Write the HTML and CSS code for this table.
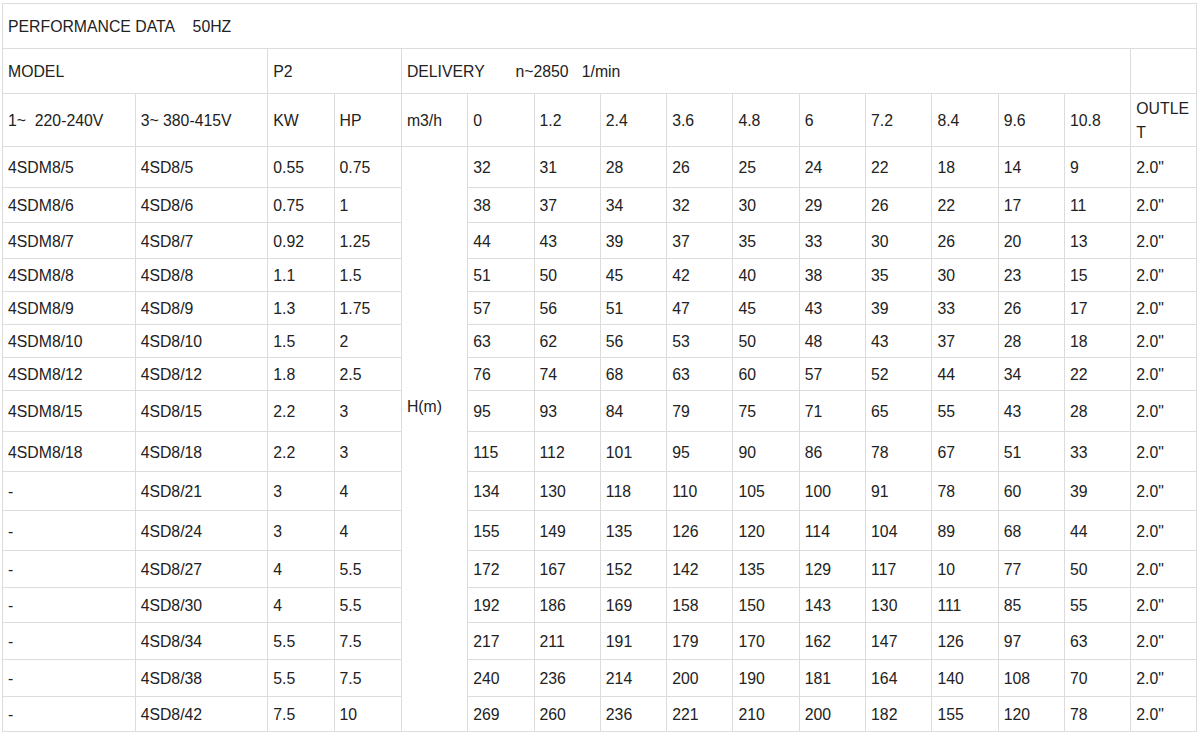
FILE: index.html
```html
<!DOCTYPE html>
<html>
<head>
<meta charset="utf-8">
<title>Performance data</title>
<link rel="stylesheet" href="styles.css">
</head>
<body>
<table class="perf">
<colgroup>
<col class="c2"><col class="c2"><col class="c1"><col class="c1w"><col class="c1"><col class="c1"><col class="c1"><col class="c1"><col class="c1"><col class="c1"><col class="c1"><col class="c1"><col class="c1"><col class="c1"><col class="c1"><col class="c1n">
</colgroup>
<tbody>
<tr class="h45"><td colspan="16">PERFORMANCE DATA&nbsp;&nbsp;&nbsp;&nbsp;50HZ</td></tr>
<tr class="h45"><td colspan="2">MODEL</td><td colspan="2">P2</td><td colspan="11">DELIVERY&nbsp;&nbsp;&nbsp;&nbsp;&nbsp;&nbsp;&nbsp;n~2850&nbsp;&nbsp;&nbsp;1/min</td><td></td></tr>
<tr class="h53"><td>1~&nbsp;&nbsp;220-240V</td><td>3~ 380-415V</td><td>KW</td><td>HP</td><td>m3/h</td><td>0</td><td>1.2</td><td>2.4</td><td>3.6</td><td>4.8</td><td>6</td><td>7.2</td><td>8.4</td><td>9.6</td><td>10.8</td><td class="wrap">OUTLET</td></tr>
<tr class="h41"><td>4SDM8/5</td><td>4SD8/5</td><td>0.55</td><td>0.75</td><td rowspan="16" class="hm">H(m)</td><td>32</td><td>31</td><td>28</td><td>26</td><td>25</td><td>24</td><td>22</td><td>18</td><td>14</td><td>9</td><td>2.0"</td></tr>
<tr class="h35"><td>4SDM8/6</td><td>4SD8/6</td><td>0.75</td><td>1</td><td>38</td><td>37</td><td>34</td><td>32</td><td>30</td><td>29</td><td>26</td><td>22</td><td>17</td><td>11</td><td>2.0"</td></tr>
<tr class="h36"><td>4SDM8/7</td><td>4SD8/7</td><td>0.92</td><td>1.25</td><td>44</td><td>43</td><td>39</td><td>37</td><td>35</td><td>33</td><td>30</td><td>26</td><td>20</td><td>13</td><td>2.0"</td></tr>
<tr class="h33"><td>4SDM8/8</td><td>4SD8/8</td><td>1.1</td><td>1.5</td><td>51</td><td>50</td><td>45</td><td>42</td><td>40</td><td>38</td><td>35</td><td>30</td><td>23</td><td>15</td><td>2.0"</td></tr>
<tr class="h33"><td>4SDM8/9</td><td>4SD8/9</td><td>1.3</td><td>1.75</td><td>57</td><td>56</td><td>51</td><td>47</td><td>45</td><td>43</td><td>39</td><td>33</td><td>26</td><td>17</td><td>2.0"</td></tr>
<tr class="h33"><td>4SDM8/10</td><td>4SD8/10</td><td>1.5</td><td>2</td><td>63</td><td>62</td><td>56</td><td>53</td><td>50</td><td>48</td><td>43</td><td>37</td><td>28</td><td>18</td><td>2.0"</td></tr>
<tr class="h33"><td>4SDM8/12</td><td>4SD8/12</td><td>1.8</td><td>2.5</td><td>76</td><td>74</td><td>68</td><td>63</td><td>60</td><td>57</td><td>52</td><td>44</td><td>34</td><td>22</td><td>2.0"</td></tr>
<tr class="h41"><td>4SDM8/15</td><td>4SD8/15</td><td>2.2</td><td>3</td><td>95</td><td>93</td><td>84</td><td>79</td><td>75</td><td>71</td><td>65</td><td>55</td><td>43</td><td>28</td><td>2.0"</td></tr>
<tr class="h40"><td>4SDM8/18</td><td>4SD8/18</td><td>2.2</td><td>3</td><td>115</td><td>112</td><td>101</td><td>95</td><td>90</td><td>86</td><td>78</td><td>67</td><td>51</td><td>33</td><td>2.0"</td></tr>
<tr class="h39"><td>-</td><td>4SD8/21</td><td>3</td><td>4</td><td>134</td><td>130</td><td>118</td><td>110</td><td>105</td><td>100</td><td>91</td><td>78</td><td>60</td><td>39</td><td>2.0"</td></tr>
<tr class="h40"><td>-</td><td>4SD8/24</td><td>3</td><td>4</td><td>155</td><td>149</td><td>135</td><td>126</td><td>120</td><td>114</td><td>104</td><td>89</td><td>68</td><td>44</td><td>2.0"</td></tr>
<tr class="h37"><td>-</td><td>4SD8/27</td><td>4</td><td>5.5</td><td>172</td><td>167</td><td>152</td><td>142</td><td>135</td><td>129</td><td>117</td><td>10</td><td>77</td><td>50</td><td>2.0"</td></tr>
<tr class="h35"><td>-</td><td>4SD8/30</td><td>4</td><td>5.5</td><td>192</td><td>186</td><td>169</td><td>158</td><td>150</td><td>143</td><td>130</td><td>111</td><td>85</td><td>55</td><td>2.0"</td></tr>
<tr class="h37"><td>-</td><td>4SD8/34</td><td>5.5</td><td>7.5</td><td>217</td><td>211</td><td>191</td><td>179</td><td>170</td><td>162</td><td>147</td><td>126</td><td>97</td><td>63</td><td>2.0"</td></tr>
<tr class="h37"><td>-</td><td>4SD8/38</td><td>5.5</td><td>7.5</td><td>240</td><td>236</td><td>214</td><td>200</td><td>190</td><td>181</td><td>164</td><td>140</td><td>108</td><td>70</td><td>2.0"</td></tr>
<tr class="h35"><td>-</td><td>4SD8/42</td><td>7.5</td><td>10</td><td>269</td><td>260</td><td>236</td><td>221</td><td>210</td><td>200</td><td>182</td><td>155</td><td>120</td><td>78</td><td>2.0"</td></tr>
</tbody>
</table>
</body>
</html>
```

FILE: styles.css
```css
html, body {
  margin: 0;
  padding: 0;
  background: #fff;
}

body {
  padding: 3px 0 0 2px;
}

.perf {
  border-collapse: collapse;
  table-layout: fixed;
  width: 1195px;
  font-family: "Liberation Sans", Arial, sans-serif;
  font-size: 15.8px;
  line-height: 1.5;
  color: #222;
}

.perf td {
  border: 1px solid #dcdcdc;
  padding: 2px 5px 0;
  vertical-align: middle;
  text-align: left;
  white-space: nowrap;
}

.perf td.wrap {
  white-space: normal;
  word-break: break-all;
}

.perf td.hm {
  padding-bottom: 66px;
}

.c2 { width: 132px; }
.c1 { width: 66px; }
.c1w { width: 67px; }
.c1n { width: 65px; }

.h33 { height: 33px; }
.h35 { height: 35px; }
.h36 { height: 36px; }
.h37 { height: 37px; }
.h39 { height: 39px; }
.h40 { height: 40px; }
.h41 { height: 41px; }
.h45 { height: 45px; }
.h53 { height: 53px; }
```
